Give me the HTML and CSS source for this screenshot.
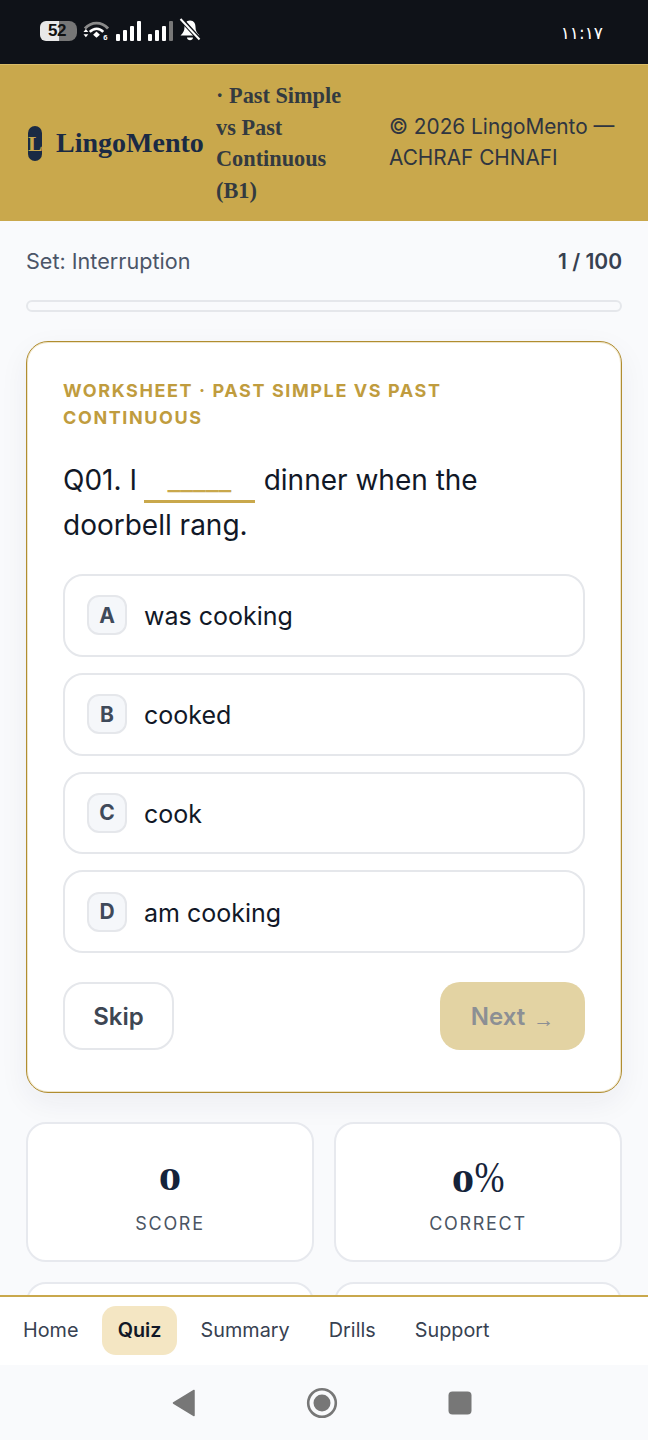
FILE: index.html
```html
<!DOCTYPE html>
<html lang="en">
<head>
<meta charset="utf-8">
<title>LingoMento</title>
<link rel="stylesheet" href="styles.css">
</head>
<body>
<div class="status">
  <div class="status-icons">
    <div class="battery"><span class="battery-text">52</span></div>
    <svg class="ic-wifi" width="27" height="21" viewBox="0 0 28 21">
      <path d="M2 8.500C9 1 19 1 26 8.500" fill="none" stroke="#8a8a8a" stroke-width="3"/>
      <path d="M7 12C11.500 7.500 17 7.500 21 12" fill="none" stroke="#fff" stroke-width="2.600"/>
      <path d="M10.500 15L14 11.500L17.500 15L14 18Z" fill="#fff"/>
      <path d="M0.500 10L5.500 10L3 7ZM0.500 12.500L5.500 12.500L3 15.500Z" transform="translate(0 2)" fill="#fff"/>
      <text x="21" y="20" class="wifi-six">6</text>
    </svg>
    <svg class="ic-bars" width="25" height="20" viewBox="0 0 25 20">
      <rect x="0" y="13" width="4" height="7" rx="1" fill="#fff"/><rect x="7" y="9" width="4" height="11" rx="1" fill="#fff"/><rect x="14" y="5" width="4" height="15" rx="1" fill="#fff"/><rect x="21" y="0" width="4" height="20" rx="1" fill="#fff"/>
    </svg>
    <svg class="ic-bars" width="25" height="20" viewBox="0 0 25 20">
      <rect x="0" y="13" width="4" height="7" rx="1" fill="#fff"/><rect x="7" y="9" width="4" height="11" rx="1" fill="#fff"/><rect x="14" y="5" width="4" height="15" rx="1" fill="#fff"/><rect x="21" y="0" width="4" height="20" rx="1" fill="#777"/>
    </svg>
    <svg class="ic-bell" width="22" height="24" viewBox="0 0 22 24">
      <path d="M11 2.500C7 2.500 5.500 5.500 5.500 9C5.500 13 4 15 1.500 17.500H20.500C18 15 16.500 13 16.500 9C16.500 5.500 15 2.500 11 2.500Z" fill="#fff"/>
      <path d="M8 19.500H14C14 23 8 23 8 19.500Z" fill="#fff"/>
      <path d="M2 1L21 22" stroke="#0f1218" stroke-width="4.500"/>
      <path d="M1.500 1L20.500 21.500" stroke="#fff" stroke-width="2"/>
    </svg>
  </div>
  <div class="clock">١١:١٧</div>
</div>

<header class="header">
  <div class="brand">
    <div class="brand-mark">L</div>
    <div class="brand-name">LingoMento</div>
  </div>
  <div class="brand-sub">· Past Simple vs Past Continuous (B1)</div>
  <div class="brand-copy">© 2026 LingoMento — ACHRAF CHNAFI</div>
</header>

<main class="main">
  <div class="meta">
    <span class="meta-set">Set: Interruption</span>
    <span class="meta-count">1 / 100</span>
  </div>
  <div class="progress"></div>

  <section class="card">
    <div class="eyebrow">WORKSHEET · PAST SIMPLE VS PAST CONTINUOUS</div>
    <div class="question">Q01. I <span class="blank">_____</span> dinner when the doorbell rang.</div>
    <div class="options">
      <div class="option"><span class="badge">A</span><span class="option-text">was cooking</span></div>
      <div class="option"><span class="badge">B</span><span class="option-text">cooked</span></div>
      <div class="option"><span class="badge">C</span><span class="option-text">cook</span></div>
      <div class="option"><span class="badge">D</span><span class="option-text">am cooking</span></div>
    </div>
    <div class="actions">
      <div class="btn btn-skip">Skip</div>
      <div class="btn btn-next">Next <span class="arrow">→</span></div>
    </div>
  </section>

  <section class="stats">
    <div class="stat"><div class="stat-value"><span class="zero">0</span></div><div class="stat-label">SCORE</div></div>
    <div class="stat"><div class="stat-value"><span class="zero">0</span><span class="pct">%</span></div><div class="stat-label">CORRECT</div></div>
    <div class="stat"></div>
    <div class="stat"></div>
  </section>
</main>

<nav class="tabs">
  <div class="tab">Home</div>
  <div class="tab tab-active">Quiz</div>
  <div class="tab">Summary</div>
  <div class="tab">Drills</div>
  <div class="tab">Support</div>
</nav>

<div class="sysnav">
  <svg width="24" height="28" viewBox="0 0 24 28"><path d="M22 1.500V26.500L1.500 14Z" fill="#777" stroke="#777" stroke-width="1.500" stroke-linejoin="round"/></svg>
  <svg width="32" height="32" viewBox="0 0 32 32"><circle cx="16" cy="16" r="13.800" fill="none" stroke="#777" stroke-width="2.600"/><circle cx="16" cy="16" r="8.500" fill="#777"/></svg>
  <svg width="24" height="24" viewBox="0 0 24 24"><rect x="0.500" y="0.500" width="23" height="23" rx="4" fill="#777"/></svg>
</div>
</body>
</html>
```
FILE: styles.css
```css
* { box-sizing: border-box; }
html, body { margin: 0; padding: 0; }
body {
  width: 648px;
  height: 1440px;
  overflow: hidden;
  display: flex;
  flex-direction: column;
  font-family: Inter, "Liberation Sans", sans-serif;
  background: #f9fafc;
  color: #111827;
}
.status {
  height: 64px;
  flex: none;
  background: #0f1218;
  display: flex;
  justify-content: space-between;
  padding: 20px 45px 0 40px;
}
.status-icons { display: flex; align-items: flex-start; }
.battery {
  width: 37px;
  height: 20px;
  margin-top: 1px;
  border-radius: 6px 8px 8px 6px;
  background: linear-gradient(90deg, #e8e8e8 0 51%, #777 51% 100%);
  display: flex;
  align-items: center;
  padding-left: 8px;
}
.battery-text { font: 700 17px/20px "Liberation Sans", sans-serif; color: #111; letter-spacing: -0.5px; }
.ic-wifi { margin-left: 6px; }
.wifi-six { font: 700 8px "Liberation Sans", sans-serif; fill: #fff; }
.ic-bars { margin: 1px 0 0 6px; }
.ic-bars + .ic-bars { margin-left: 7px; }
.ic-bell { margin: -2px 0 0 6px; }
.clock {
  color: #fff;
  font: 400 17px/26px "DejaVu Sans", sans-serif;
  letter-spacing: -2.400px;
}
.header {
  height: 157px;
  flex: none;
  background: #c9a84c;
  border-top: 1px solid #d9bc68;
  display: flex;
  align-items: center;
  padding: 0 26px 0 28px;
}
.brand { display: flex; align-items: center; flex: none; }
.brand-mark {
  width: 14px;
  height: 35px;
  border-radius: 7px;
  background: #1a2a44;
  color: #c9a84c;
  font: 700 22px/35px "Liberation Serif", serif;
  text-align: center;
}
.brand-name {
  margin-left: 14px;
  font: 700 28px/40px "Liberation Serif", serif;
  color: #1a2a44;
  width: 147px;
  white-space: nowrap;
}
.brand-sub {
  margin-left: 13px;
  width: 135px;
  flex: none;
  font: 700 22.300px/31.500px "Liberation Serif", serif;
  color: #333a40;
}
.brand-copy {
  margin-left: 38px;
  width: 232px;
  flex: none;
  font-size: 20.800px;
  line-height: 31px;
  margin-top: -2px;
  color: #2f3540;
}
.main {
  flex: 1;
  min-height: 0;
  overflow: hidden;
  padding: 26px 26px 0;
}
.meta { display: flex; justify-content: space-between; align-items: center; height: 28px; font-size: 21.600px; }
.meta-set { color: #4b5568; }
.meta-count { color: #374151; font-size: 21px; font-weight: 600; }
.progress {
  height: 12px;
  margin-top: 25px;
  border: 2px solid #e5e7eb;
  border-radius: 6px;
  background: #f9fafc;
}
.card {
  margin-top: 29px;
  height: 752px;
  background: #fff;
  border: 1px solid #b08d30;
  border-radius: 22px;
  padding: 35px 36px 0;
  box-shadow: inset 0 0 0 1px rgba(201, 168, 76, 0.3), 0 10px 30px rgba(30, 40, 70, 0.06);
}
.eyebrow {
  font-size: 18px;
  line-height: 27px;
  font-weight: 700;
  letter-spacing: 1.600px;
  color: #c09c3e;
  padding-right: 100px;
}
.question {
  margin-top: 27px;
  font-size: 28px;
  line-height: 45px;
  color: #111827;
}
.blank {
  display: inline-block;
  line-height: 36px;
  width: 111px;
  margin: 0 1px 0 -1px;
  padding-bottom: 2px;
  text-align: center;
  color: #c9a84c;
  border-bottom: 3px solid #c9a84c;
}
.options { margin-top: 26px; display: flex; flex-direction: column; gap: 16px; }
.option {
  height: 82.800px;
  border: 2px solid #e5e7eb;
  border-radius: 20px;
  display: flex;
  align-items: center;
  gap: 17px;
  padding-left: 22px;
  font-size: 25px;
  color: #111827;
}
.option-text { padding-top: 2px; }
.badge {
  width: 40px;
  height: 40px;
  flex: none;
  border: 2px solid #e5e7eb;
  border-radius: 12px;
  background: #f5f7fa;
  color: #3f4a5a;
  font-size: 21px;
  font-weight: 700;
  display: flex;
  align-items: center;
  justify-content: center;
}
.actions { margin-top: 28.800px; display: flex; justify-content: space-between; }
.btn {
  height: 68px;
  padding-top: 2px;
  border-radius: 20px;
  font-size: 24px;
  font-weight: 600;
  display: flex;
  align-items: center;
  justify-content: center;
  gap: 8px;
}
.arrow { font: 400 21px/1 "Liberation Sans", sans-serif; margin-top: 5px; }
.btn-skip { width: 111px; border: 2px solid #e5e7eb; color: #3d4653; background: #fff; }
.btn-next { width: 145px; background: #e3d3a3; color: #8c8f94; }
.stats {
  margin-top: 29px;
  display: grid;
  grid-template-columns: 1fr 1fr;
  gap: 20px;
}
.stat {
  height: 140px;
  background: #fff;
  border: 2px solid #e7e9ee;
  border-radius: 20px;
  text-align: center;
  padding-top: 32px;
}
.stat-value {
  font: 700 31px/48px "Liberation Serif", serif;
  color: #15233a;
  display: flex;
  justify-content: center;
  align-items: baseline;
  height: 48px;
}
.zero { display: inline-block; width: 22px; transform: scaleX(1.450); }
.pct {
  display: inline-block;
  font-size: 36px;
  font-weight: 400;
  margin-left: 1px;
  line-height: 48px;
  transform: scaleY(1.250);
  transform-origin: 50% 36px;
}
.stat-label { margin-top: 7px; font-size: 18px; line-height: 26px; letter-spacing: 1.700px; color: #4b5563; }
.tabs {
  height: 70px;
  flex: none;
  background: #fff;
  border-top: 2px solid #c9a84c;
  display: flex;
  align-items: center;
  gap: 7.200px;
  padding: 0 0 1px 7px;
  font-size: 19.800px;
  color: #374151;
}
.tab { height: 49px; padding: 0 16px; line-height: 49px; border-radius: 14px; }
.tab-active { background: #f4e6c3; color: #111827; font-weight: 600; }
.sysnav {
  height: 75px;
  flex: none;
  background: #f9fafc;
  display: flex;
  align-items: center;
  gap: 110px;
  padding-left: 172px;
}
```
